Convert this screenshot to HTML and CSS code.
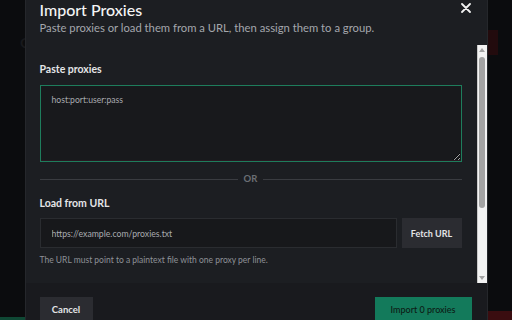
FILE: index.html
```html
<!DOCTYPE html>
<html lang="en">
<head>
    <meta charset="UTF-8">
    <meta name="viewport" content="width=device-width, initial-scale=1.0">
    <title>Import Proxies</title>
    <link rel="stylesheet" href="styles.css">
</head>
<body>

<div class="page">
    <div class="page-top">
        <span class="page-logo">C</span>
        <span class="page-danger"></span>
    </div>
    <div class="page-bottom">
        <span class="page-save"></span>
        <span class="page-delete"></span>
    </div>
</div>

<div class="overlay">
    <div class="modal">
        <div class="modal-header">
            <div>
                <h2>Import Proxies</h2>
                <p>Paste proxies or load them from a URL, then assign them to a group.</p>
            </div>
            <button class="close-btn" type="button" aria-label="Close">
                <svg width="10" height="10" viewBox="0 0 10 10">
                    <path d="M1 1L9 9M9 1L1 9" stroke="#f2f2f2" stroke-width="1.8" stroke-linecap="round"/>
                </svg>
            </button>
        </div>

        <div class="modal-body">
            <div class="body-content">
                <label class="field-label" for="proxyList">Paste proxies</label>
                <textarea id="proxyList" placeholder="host:port:user:pass"></textarea>

                <div class="divider"><span>OR</span></div>

                <label class="field-label" for="proxyUrl">Load from URL</label>
                <div class="url-row">
                    <input type="text" id="proxyUrl" placeholder="https://example.com/proxies.txt">
                    <button class="btn btn-secondary btn-fetch" type="button">Fetch URL</button>
                </div>
                <p class="hint">The URL must point to a plaintext file with one proxy per line.</p>
            </div>
            <div class="scrollbar">
                <span class="scroll-arrow up"></span>
                <span class="scroll-thumb"></span>
                <span class="scroll-rest"></span>
                <span class="scroll-arrow down"></span>
            </div>
        </div>

        <div class="modal-footer">
            <button class="btn btn-secondary btn-cancel" type="button">Cancel</button>
            <button class="btn btn-primary" type="button">Import 0 proxies</button>
        </div>
    </div>
</div>

</body>
</html>
```

FILE: styles.css
```css
body {
    font-family: Lato, "Noto Sans", sans-serif;
    margin: 0;
    padding: 0;
    background-color: #0b0c0e;
    height: 320px;
    overflow: hidden;
}

.page {
    height: 320px;
    display: flex;
    flex-direction: column;
    justify-content: space-between;
}

.page-top {
    display: flex;
    justify-content: space-between;
    align-items: center;
    padding: 30px 14px 0 20px;
}

.page-logo {
    color: #18191c;
    font-size: 14px;
    font-weight: 700;
}

.page-danger {
    width: 12px;
    height: 25px;
    background-color: #220b0d;
}

.page-bottom {
    display: flex;
    justify-content: space-between;
    align-items: flex-end;
}

.page-save {
    width: 60px;
    height: 3px;
    background-color: #0f4834;
}

.page-delete {
    width: 40px;
    height: 9px;
    background-color: #3a0d10;
}

.overlay {
    position: fixed;
    inset: 0;
    display: flex;
    align-items: center;
    justify-content: center;
}

.modal {
    width: 461px;
    flex-shrink: 0;
    background-color: #1c1e22;
    border: 1px solid #25272b;
    display: flex;
    flex-direction: column;
}

.modal-header {
    display: flex;
    justify-content: space-between;
    align-items: flex-start;
    padding: 16px 16px 0 14px;
    height: 45px;
}

.modal-header h2 {
    margin: 0;
    color: #f4f4f5;
    font-size: 16px;
    font-weight: 500;
    line-height: 20px;
}

.modal-header p {
    margin: 0;
    color: #a4a7ad;
    font-size: 11.25px;
    line-height: 16px;
}

.close-btn {
    background: none;
    border: none;
    padding: 0;
    margin-top: 3px;
    cursor: pointer;
    display: flex;
}

.modal-body {
    height: 238px;
    display: flex;
}

.body-content {
    flex: 1;
    padding: 16px 15px 0 14px;
    display: flex;
    flex-direction: column;
}

.scrollbar {
    width: 9px;
    background-color: #f3f3f3;
    border-left: 1px solid #c9c9c9;
    display: flex;
    flex-direction: column;
    align-items: center;
}

.scroll-arrow {
    height: 10px;
    display: flex;
    align-items: center;
}

.scroll-arrow.up::before,
.scroll-arrow.down::before {
    content: "";
    border-left: 3px solid transparent;
    border-right: 3px solid transparent;
}

.scroll-arrow.up::before {
    border-bottom: 4px solid #a3a3a3;
}

.scroll-arrow.down::before {
    border-top: 4px solid #a3a3a3;
}

.scroll-thumb {
    width: 6px;
    height: 151px;
    margin-top: 2px;
    background-color: #a3a3a3;
    border-radius: 3px;
}

.scroll-rest {
    flex: 1;
}

.field-label {
    color: #e4e5e7;
    font-size: 10.5px;
    font-weight: 700;
    line-height: 16px;
    margin-bottom: 8px;
}

.field-label[for="proxyUrl"] {
    margin-top: 1px;
    margin-bottom: 7px;
}

textarea {
    flex-shrink: 0;
    height: 77px;
    box-sizing: border-box;
    background-color: #18191c;
    border: 1px solid #1e7d5c;
    box-shadow: inset 0 -1px 0 #2a1822;
    outline: none;
    color: #e4e5e7;
    font-family: inherit;
    font-size: 8.6px;
    padding: 9px 11px;
}

::placeholder {
    color: #a9abb0;
}

.divider {
    display: flex;
    align-items: center;
    gap: 6px;
    margin: 11px 0 9px 0;
    color: #6b6e74;
    font-size: 9.5px;
    font-weight: 700;
    line-height: 12px;
}

.divider::before,
.divider::after {
    content: "";
    flex: 1;
    height: 1px;
    background-color: #3a3c41;
}

.url-row {
    display: flex;
    gap: 5px;
    flex-shrink: 0;
}

.url-row input {
    flex: 1;
    height: 30px;
    box-sizing: border-box;
    background-color: #17181b;
    border: 1px solid #2a2c30;
    outline: none;
    color: #e4e5e7;
    font-family: inherit;
    font-size: 8.7px;
    padding: 0 11px;
}

.btn {
    border: none;
    font-family: inherit;
    font-size: 9px;
    font-weight: 700;
    height: 30px;
    padding: 0;
    cursor: pointer;
}

.btn-secondary {
    background-color: #2b2c31;
    color: #e4e5e7;
}

.btn-fetch {
    width: 60px;
}

.btn-cancel {
    width: 53px;
    font-size: 9.5px;
}

.btn-primary {
    background-color: #137a5b;
    color: #0d1a15;
    font-weight: 500;
    width: 97px;
}

.modal-footer .btn {
    height: 25px;
}

.hint {
    margin: 5px 0 0 0;
    color: #8e9197;
    font-size: 8.5px;
    line-height: 14px;
}

.modal-footer {
    display: flex;
    justify-content: space-between;
    padding: 14px 15px 14px 14px;
    background-color: #191a1e;
}
```
